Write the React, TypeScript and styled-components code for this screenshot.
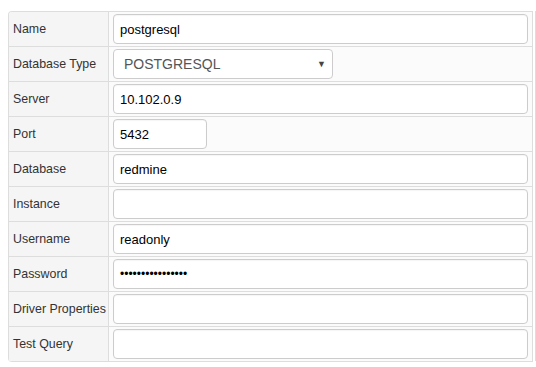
import styled, { createGlobalStyle } from 'styled-components';

const GlobalStyle = createGlobalStyle`
  html, body {
    margin: 0;
    padding: 0;
    background: #ffffff;
    overflow: hidden;
  }
  body {
    font-family: 'Liberation Sans', Arial, sans-serif;
  }
`;

type Field = {
  label: string;
  value?: string;
  kind?: 'text' | 'select' | 'password';
  width?: string;
};

const fields: Field[] = [
  { label: 'Name', value: 'postgresql' },
  { label: 'Database Type', value: 'POSTGRESQL', kind: 'select' },
  { label: 'Server', value: '10.102.0.9' },
  { label: 'Port', value: '5432', width: '94px' },
  { label: 'Database', value: 'redmine' },
  { label: 'Instance', value: '' },
  { label: 'Username', value: 'readonly' },
  { label: 'Password', value: 'xxxxxxxxxxxxxxxx', kind: 'password' },
  { label: 'Driver Properties', value: '' },
  { label: 'Test Query', value: '' },
];

const App = () => {
  return (
    <>
      <GlobalStyle />
      <Page>
        <Form>
          {fields.map((f) => (
            <Row key={f.label}>
              <LabelCell>{f.label}</LabelCell>
              <ValueCell>
                {f.kind === 'select' ? (
                  <SelectWrap>
                    <Select defaultValue={f.value}>
                      <option value="POSTGRESQL">POSTGRESQL</option>
                      <option value="MYSQL">MYSQL</option>
                      <option value="ORACLE">ORACLE</option>
                    </Select>
                  </SelectWrap>
                ) : (
                  <Input
                    type={f.kind === 'password' ? 'password' : 'text'}
                    defaultValue={f.value}
                    $width={f.width}
                    $password={f.kind === 'password'}
                    readOnly
                  />
                )}
              </ValueCell>
            </Row>
          ))}
        </Form>
        <NextColumn />
      </Page>
    </>
  );
};

const Page = styled.div`
  display: flex;
  padding: 11px 0 0 8px;
`;

const Form = styled.div`
  width: 523px;
  flex-shrink: 0;
  border: 1px solid #dddddd;
  border-bottom: none;
  border-radius: 4px 0 0 4px;
  overflow: hidden;
`;

const Row = styled.div`
  display: flex;
  height: 34px;
  border-bottom: 1px solid #dddddd;
`;

const LabelCell = styled.div`
  width: 95px;
  flex-shrink: 0;
  display: flex;
  align-items: center;
  padding-left: 4px;
  background: #f5f5f5;
  border-right: 1px solid #dddddd;
  font-size: 12.4px;
  color: #333333;
  white-space: nowrap;
`;

const ValueCell = styled.div`
  flex: 1;
  display: flex;
  align-items: center;
  padding: 0 4px;
  background: #fbfbfb;
`;

const Input = styled.input<{ $width?: string; $password?: boolean }>`
  box-sizing: border-box;
  width: ${({ $width }) => ($width ? $width : '100%')};
  height: 30px;
  padding: 0 6px;
  border: 1px solid #cccccc;
  border-radius: 4px;
  background: #ffffff;
  font-family: 'Liberation Sans', Arial, sans-serif;
  font-size: ${({ $password }) => ($password ? '12px' : '13px')};
  color: #000000;
  outline: none;
  box-shadow: inset 0 1px 1px rgba(0, 0, 0, 0.04);
`;

const SelectWrap = styled.div`
  position: relative;
  width: 220px;

  &::after {
    content: '▼';
    position: absolute;
    right: 7px;
    top: 50%;
    transform: translateY(-50%);
    font-size: 9px;
    color: #444444;
    pointer-events: none;
  }
`;

const Select = styled.select`
  box-sizing: border-box;
  width: 100%;
  height: 30px;
  padding: 0 10px;
  border: 1px solid #cccccc;
  border-radius: 4px;
  background: #ffffff;
  font-family: 'Liberation Sans', Arial, sans-serif;
  font-size: 14px;
  color: #555555;
  appearance: none;
  -webkit-appearance: none;
  outline: none;
`;

const NextColumn = styled.div`
  width: 1px;
  height: 350px;
  margin-left: 2px;
  border-left: 1px solid #dddddd;
`;

export default App;
